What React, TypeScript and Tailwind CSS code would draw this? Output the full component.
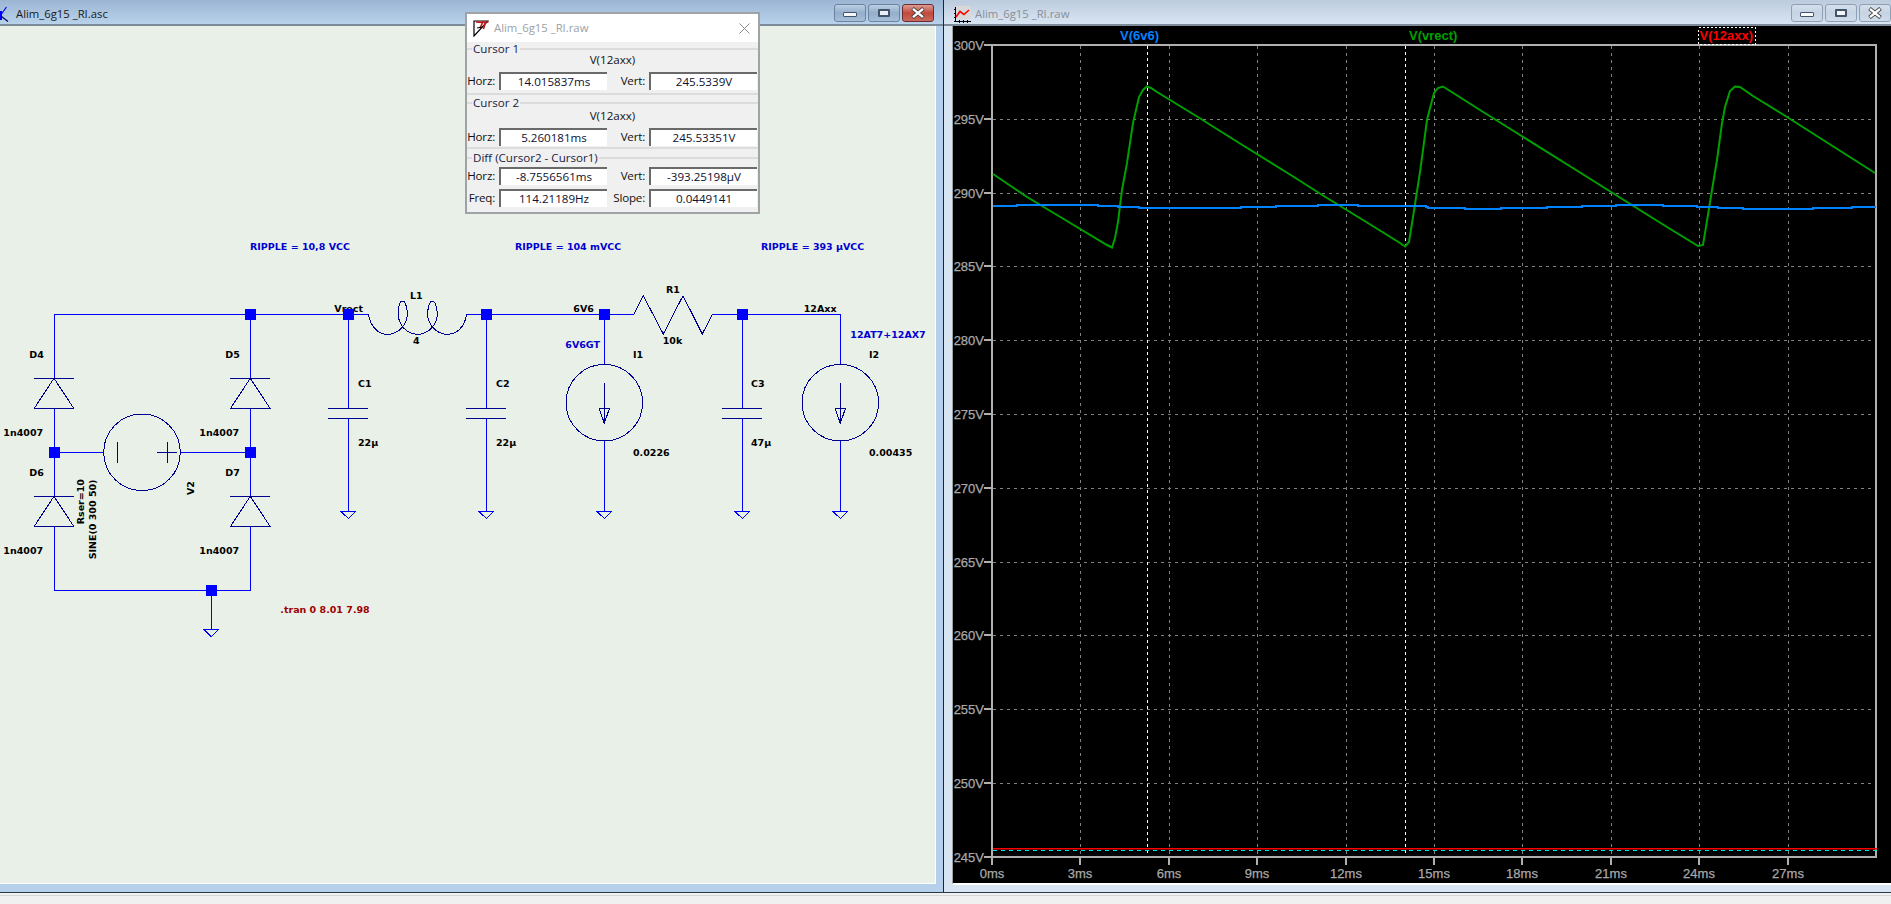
const WIRE = "#0000ff";
const SYM = "#000090";

// green trace, picked off the reference
const vrect = [
  [993, 174], [1027, 197], [1062, 218], [1107, 245], [1112, 247.5], [1115, 238], [1118, 222], [1122, 190], [1127, 163], [1133, 123], [1139, 97],
  [1143, 90], [1147, 86.5], [1151, 88], [1157, 92], [1197, 116.5], [1240, 143.5], [1290, 174.5], [1323, 195.5], [1363, 220], [1400, 243], [1405, 246.5],
  [1409, 242], [1413, 217], [1420, 172], [1423, 150], [1427, 120], [1434, 93], [1438, 88], [1443, 86.5], [1480, 110], [1520, 135], [1580, 172.5],
  [1627, 202], [1667, 227], [1698, 246], [1703, 245], [1706, 227], [1712, 190], [1717, 160], [1722, 123], [1725, 107], [1730, 91], [1735, 86.5],
  [1740, 87], [1753, 96], [1787, 117], [1875, 173],
];

// blue trace: x where the step ends, y of the step
const v6v6 = [
  [1017, 206], [1098, 205], [1118, 206], [1139, 207], [1241, 208], [1276, 207], [1318, 206], [1358, 205], [1426, 206], [1428, 207], [1428, 207],
  [1465, 208], [1501, 209], [1547, 208], [1582, 207], [1616, 206], [1663, 205], [1697, 206], [1718, 207], [1743, 208], [1813, 209], [1852, 208], [1876, 207],
];
const blueLine = (() => {
  let x = 993;
  const out: string[] = [];
  for (const [x2, y] of v6v6) {
    out.push(`${x},${y} ${x2},${y}`);
    x = x2;
  }
  return out.join(" ");
})();

const xTicks = [
  [992, "0ms"], [1080, "3ms"], [1169, "6ms"], [1257, "9ms"], [1346, "12ms"], [1434, "15ms"], [1522, "18ms"], [1611, "21ms"], [1699, "24ms"], [1788, "27ms"],
] as const;
const yTicks = ["300V", "295V", "290V", "285V", "280V", "275V", "270V", "265V", "260V", "255V", "250V", "245V"];

function Ground({ x, y }: { x: number; y: number }) {
  return <polygon points={`${x - 7.7},${y} ${x + 7.7},${y} ${x},${y + 7.5}`} fill="none" stroke={WIRE} />;
}

function Junction({ x, y }: { x: number; y: number }) {
  return <rect x={x - 5.5} y={y - 5.5} width={11} height={11} fill={WIRE} />;
}

function Diode({ x, y }: { x: number; y: number }) {
  return (
    <g fill="none" stroke={SYM}>
      <path d={`M${x - 20} ${y}H${x + 20}`} />
      <polygon points={`${x},${y} ${x + 19.7},${y + 30} ${x - 19.7},${y + 30}`} />
    </g>
  );
}

function Cap({ x }: { x: number }) {
  return (
    <g>
      <path d={`M${x} 314.3V408.3M${x} 418.3V511`} stroke={WIRE} fill="none" />
      <path d={`M${x - 20} 408.3H${x + 20}M${x - 20} 418.3H${x + 20}`} stroke={SYM} fill="none" />
      <Ground x={x} y={511} />
    </g>
  );
}

function CurrentSource({ x, y0 }: { x: number; y0: number }) {
  return (
    <g fill="none">
      <path d={`M${x} ${y0}V364.3M${x} 441V511`} stroke={WIRE} />
      <circle cx={x} cy={402.7} r={38.3} stroke={SYM} />
      <path d={`M${x} 383.3V423.3`} stroke={SYM} />
      <polygon points={`${x - 5.2},408.3 ${x + 5.2},408.3 ${x},423.3`} stroke={SYM} />
      <Ground x={x} y={511} />
    </g>
  );
}

function Label({ x, y, children, color = "#000000", rot = false }: { x: number; y: number; children: string; color?: string; rot?: boolean }) {
  return (
    <text
      x={x}
      y={y}
      fill={color}
      dominantBaseline="central"
      transform={rot ? `rotate(-90 ${x} ${y})` : undefined}
      className="font-['DejaVu_Sans',sans-serif] text-[9.5px] font-bold"
    >
      {children}
    </text>
  );
}

function Schematic() {
  return (
    <svg viewBox="0 26 935 858" shapeRendering="crispEdges" className="h-[858px] w-[935px] shrink-0">
      {/* wires */}
      <g fill="none" stroke={WIRE}>
        <path d="M54 378.3V314.3H368.3M466.7 314.3H633.7M712.3 314.3H840.3" />
        <path d="M250.3 314.3V378.3M54 408.3V496.3M250.3 408.3V496.3" />
        <path d="M54 526.3V590.3H250.3V526.3" />
        <path d="M211.3 590.3V629.3" />
        <path d="M54 452.3H103.7M180.3 452.3H250.3" />
      </g>
      <Ground x={211.3} y={629.3} />

      <Diode x={54} y={378.3} />
      <Diode x={250.3} y={378.3} />
      <Diode x={54} y={496.3} />
      <Diode x={250.3} y={496.3} />

      {/* V2 */}
      <g fill="none" stroke={SYM}>
        <circle cx={142} cy={452.3} r={38.3} />
        <path d="M117.3 441.7V462.7M157 452.3H176.7M167 441.7V462.7" />
      </g>

      {/* L1 */}
      <path
        d="M368.3 314.3C371 328 379 334.3 387.7 334.3C398 334.3 407.3 325 407.3 314.3C407.3 307 405 301 402.7 301C399.5 301 398.3 308 398.3 314.3C398.3 325 407 334.3 417.7 334.3C428 334.3 437.3 325 437.3 314.3C437.3 307 435 301 432.3 301C429.5 301 427.7 308 427.7 314.3C427.7 325 437 334.3 447.3 334.3C457 334.3 464.5 327 466.7 314.3"
        fill="none"
        stroke={SYM}
      />
      {/* R1 */}
      <polyline points="633.7,314.3 643.3,295.7 663.3,334 683,295.7 702.3,334 712.3,314.3" fill="none" stroke={SYM} />

      <Cap x={348.3} />
      <Cap x={486.3} />
      <Cap x={742.3} />
      <CurrentSource x={604.3} y0={314.3} />
      <CurrentSource x={840.3} y0={314.3} />

      <Label x={250} y={246} color="#0000d0">RIPPLE = 10,8 VCC</Label>
      <Label x={515} y={246} color="#0000d0">RIPPLE = 104 mVCC</Label>
      <Label x={761} y={246} color="#0000d0">RIPPLE = 393 µVCC</Label>
      <Label x={410} y={295.3}>L1</Label>
      <Label x={413} y={340.3}>4</Label>
      <Label x={334.3} y={308.7}>Vrect</Label>
      <Label x={29.3} y={354.3}>D4</Label>
      <Label x={225.3} y={354.3}>D5</Label>
      <Label x={29.3} y={472.3}>D6</Label>
      <Label x={225.3} y={472.3}>D7</Label>
      <Label x={3.3} y={432.3}>1n4007</Label>
      <Label x={199.3} y={432.3}>1n4007</Label>
      <Label x={3.3} y={550.3}>1n4007</Label>
      <Label x={199.3} y={550.3}>1n4007</Label>
      <Label x={81} y={524.3} rot>Rser=10</Label>
      <Label x={92.7} y={559.3} rot>SINE(0 300 50)</Label>
      <Label x={190.3} y={495} rot>V2</Label>
      <Label x={358} y={383.3}>C1</Label>
      <Label x={358} y={442.7}>22µ</Label>
      <Label x={280.3} y={609.3} color="#a00000">.tran 0 8.01 7.98</Label>
      <Label x={496} y={383.3}>C2</Label>
      <Label x={496} y={442.7}>22µ</Label>
      <Label x={573.3} y={308.3}>6V6</Label>
      <Label x={565.3} y={344.3} color="#0000d0">6V6GT</Label>
      <Label x={633} y={354.3}>I1</Label>
      <Label x={633} y={452.3}>0.0226</Label>
      <Label x={666} y={289.3}>R1</Label>
      <Label x={662.7} y={340.3}>10k</Label>
      <Label x={803.7} y={308.3}>12Axx</Label>
      <Label x={850.3} y={334.3} color="#0000d0">12AT7+12AX7</Label>
      <Label x={869} y={354.3}>I2</Label>
      <Label x={869} y={452.3}>0.00435</Label>
      <Label x={751} y={383.3}>C3</Label>
      <Label x={751} y={442.7}>47µ</Label>

      {/* wire junctions go over the text, as in the reference */}
      <Junction x={250.3} y={314.3} />
      <Junction x={348.3} y={314.3} />
      <Junction x={486.3} y={314.3} />
      <Junction x={604.3} y={314.3} />
      <Junction x={742.3} y={314.3} />
      <Junction x={54} y={452.3} />
      <Junction x={250.3} y={452.3} />
      <Junction x={211.3} y={590.3} />
    </svg>
  );
}

function Plot() {
  const font = "font-['Liberation_Sans',Arial,sans-serif] text-[13px]";
  return (
    <svg viewBox="953 26 938 857" className="h-[857px] w-[938px] shrink-0 bg-black">
      {/* grid */}
      <g stroke="#808080" strokeDasharray="3 4" fill="none" shapeRendering="crispEdges">
        {xTicks.slice(1).map(([x]) => (
          <path key={x} d={`M${x + 0.5} 46V856`} />
        ))}
        {yTicks.slice(1, -1).map((_, i) => (
          <path key={i} d={`M993 ${Math.round(45 + (i + 1) * 73.8) + 0.5}H1875`} />
        ))}
      </g>

      {/* cursors */}
      <path d="M1147.5 46V855M1405.5 46V855" stroke="#ffffff" strokeDasharray="3 3" shapeRendering="crispEdges" />

      {/* frame and ticks */}
      <g stroke="#b0b0b0" fill="none" strokeWidth={2} shapeRendering="crispEdges">
        <rect x={992} y={45} width={884} height={812} />
        {yTicks.map((_, i) => (
          <path key={i} d={`M984 ${Math.round(45 + i * 73.8)}H992`} />
        ))}
        {xTicks.map(([x]) => (
          <path key={x} d={`M${x} 857V865`} />
        ))}
      </g>

      {/* traces */}
      <polyline points={vrect.map((p) => p.join(",")).join(" ")} fill="none" stroke="#00a000" strokeWidth={2} />
      <polyline points={blueLine} fill="none" stroke="#0082ff" strokeWidth={2} shapeRendering="crispEdges" />
      <path d="M993 850H1877" stroke="#00e0e0" strokeDasharray="4 4" shapeRendering="crispEdges" />
      <path d="M993 848.7H1877" stroke="#ff0000" strokeWidth={1.4} />

      {/* axis text */}
      <g fill="#a8a8a8" stroke="#a8a8a8" strokeWidth={0.25} className={font}>
        {yTicks.map((t, i) => (
          <text key={t} x={984} y={Math.round(45 + i * 73.8)} textAnchor="end" dominantBaseline="central">{t}</text>
        ))}
        {xTicks.map(([x, t]) => (
          <text key={t} x={x} y={873} textAnchor="middle" dominantBaseline="central">{t}</text>
        ))}
      </g>

      {/* trace names */}
      <g className={`${font} font-bold`}>
        <text x={1120} y={35.5} fill="#0082ff" dominantBaseline="central">V(6v6)</text>
        <text x={1409} y={35.5} fill="#00a000" dominantBaseline="central">V(vrect)</text>
        <text x={1699.5} y={35.5} fill="#ff0000" dominantBaseline="central">V(12axx)</text>
      </g>
      <rect x={1698.5} y={27.5} width={57} height={17} fill="none" stroke="#ffffff" strokeDasharray="2 2" shapeRendering="crispEdges" />
    </svg>
  );
}

function WinButtons({ faded = false }: { faded?: boolean }) {
  const base = "flex h-[18px] w-[32px] items-center justify-center rounded-[3px] border";
  const blue = faded
    ? "border-[#8f9fb3] bg-gradient-to-b from-[#d5e0ec] via-[#c5d3e3] to-[#cfdcea]"
    : "border-[#6e83a0] bg-gradient-to-b from-[#bccfe4] via-[#94aecb] to-[#a6bfda]";
  const red = faded
    ? "border-[#8f9fb3] bg-gradient-to-b from-[#d5e0ec] via-[#c5d3e3] to-[#cfdcea]"
    : "border-[#6d2a30] bg-gradient-to-b from-[#dc9c92] via-[#c2483c] to-[#c96a5c]";
  return (
    <div className="flex items-start gap-[2px]">
      <div className={`${base} ${blue}`}>
        <div className="mt-[3px] h-[5px] w-[14px] rounded-[1px] border border-[#44536a] bg-white/90" />
      </div>
      <div className={`${base} ${blue}`}>
        <div className="mt-[-1px] h-[8px] w-[12px] rounded-[1px] border-2 border-[#44536a] bg-white/80" />
      </div>
      <div className={`${base} ${red}`}>
        <svg width="16" height="12" viewBox="0 0 16 12">
          <path d="M2.5 1.5L13.5 10.5M13.5 1.5L2.5 10.5" stroke="#3d3d3d" strokeWidth="4" />
          <path d="M3 1.8L13 10.2M13 1.8L3 10.2" stroke="#ffffff" strokeWidth="2.4" />
        </svg>
      </div>
    </div>
  );
}

function SpiceIcon() {
  return (
    <svg width="10" height="17" viewBox="0 0 10 17" className="shrink-0">
      <path d="M1 5V14" stroke="#0000ff" strokeWidth="2" />
      <path d="M1.5 8L6.5 1" stroke="#0000ff" strokeWidth="1.2" fill="none" />
      <path d="M1.5 10.5L8 15.5" stroke="#000060" strokeWidth="1.2" fill="none" />
    </svg>
  );
}

function PlotIcon() {
  return (
    <svg width="17" height="17" viewBox="0 0 17 17" className="shrink-0">
      <rect x="2" width="15" height="13" fill="#d8d8d8" />
      <path d="M1.5 1V16M0 15.5H17M0 3.5H2M0 7.5H2M0 11.5H2M5.5 14V17M9.5 14V17M13.5 14V17" stroke="#000000" />
      <path d="M2 11L6 5.5L10 8.5L15 4" stroke="#ff0000" strokeWidth="1.6" fill="none" />
    </svg>
  );
}

function LtIcon() {
  return (
    <svg width="16" height="17" viewBox="0 0 16 17" className="shrink-0">
      <path d="M1 1H15L1 16Z" fill="none" stroke="#000000" strokeWidth="1.2" />
      <path d="M3 2L10 2.5L9 4L7 8M9 2H15.5M12.5 2L10.5 9" stroke="#c01818" strokeWidth="1.6" fill="none" />
      <path d="M4 8L9.5 7" stroke="#000000" strokeWidth="1.2" />
    </svg>
  );
}

function Readout({ label, value }: { label: string; value: string }) {
  return (
    <div className="flex items-center justify-end">
      <span className="pr-[4px] tracking-[-0.2px]">{label}</span>
      <div className="flex h-[18px] w-[108px] items-center justify-center border-t-2 border-l-2 border-t-[#6a6a6a] border-l-[#6a6a6a] bg-white text-[#0d1030]">
        {value}
      </div>
    </div>
  );
}

function Row({ a, b }: { a: [string, string]; b: [string, string] }) {
  return (
    <div className="flex pr-[1px]">
      <div className="w-[140px]">
        <Readout label={a[0]} value={a[1]} />
      </div>
      <div className="flex-1">
        <Readout label={b[0]} value={b[1]} />
      </div>
    </div>
  );
}

function Group({ title, className, children }: { title: string; className: string; children: React.ReactNode }) {
  return (
    <div className={`flex flex-col border-t-2 border-[#dcdcdc] ${className}`}>
      <div className="ml-[5px] mt-[-8px] h-[14px] w-fit shrink-0 bg-[#f0f0f0] px-[1px] leading-[14px] text-[#1a1a40]">{title}</div>
      {children}
    </div>
  );
}

function CursorDialog() {
  return (
    <div className="absolute left-[465px] top-[12px] flex h-[202px] w-[295px] flex-col border-2 border-[#a0a3a6] bg-[#f0f0f0] font-['Open_Sans',sans-serif] text-[11.6px] text-[#111111]">
      <div className="flex h-[28px] shrink-0 items-center gap-[5px] bg-white pl-[6px] pr-[8px]">
        <LtIcon />
        <span className="flex-1 text-[11.3px] text-[#9aa0a6]">Alim_6g15 _RI.raw</span>
        <svg width="11" height="11" viewBox="0 0 11 11">
          <path d="M0.5 0.5L10.5 10.5M10.5 0.5L0.5 10.5" stroke="#8a8a8a" />
        </svg>
      </div>
      <Group title="Cursor 1" className="mt-[6px] h-[47px] border-b-2">
        <div className="mt-[-3px] h-[14px] text-center leading-[14px]">V(12axx)</div>
        <div className="mt-[5px]"><Row a={["Horz:", "14.015837ms"]} b={["Vert:", "245.5339V"]} /></div>
      </Group>
      <Group title="Cursor 2" className="mt-[7px] h-[47px] border-b-2">
        <div className="mt-[-1px] h-[14px] text-center leading-[14px]">V(12axx)</div>
        <div className="mt-[5px]"><Row a={["Horz:", "5.260181ms"]} b={["Vert:", "245.53351V"]} /></div>
      </Group>
      <Group title="Diff (Cursor2 - Cursor1)" className="mt-[8px] flex-1">
        <div className="mt-[2px]"><Row a={["Horz:", "-8.7556561ms"]} b={["Vert:", "-393.25198µV"]} /></div>
        <div className="mt-[4px]"><Row a={["Freq:", "114.21189Hz"]} b={["Slope:", "0.0449141"]} /></div>
      </Group>
    </div>
  );
}

export default function App() {
  return (
    <div className="relative flex h-[904px] w-[1891px] flex-col overflow-hidden bg-[#f0f0f0] font-['Open_Sans',sans-serif]">
      <div className="flex h-[893px] shrink-0 border-b border-[#2a3a44]">
        {/* schematic window */}
        <div className="flex w-[944px] shrink-0 flex-col border-r border-[#0f2a38] bg-[#b6cfea]">
          <div className="flex h-[26px] shrink-0 items-start justify-between border-b-2 border-[#7d8a99] bg-gradient-to-b from-[#9cb5d3] to-[#b9d2eb] pr-[9px] pt-[4px]">
            <div className="flex items-center gap-[6px] text-[11.3px] text-[#1a1a1a]">
              <SpiceIcon />
              <span className="leading-[20px]">Alim_6g15 _RI.asc</span>
            </div>
            <WinButtons />
          </div>
          <div className="h-[858px] w-[936px] shrink-0 border-r border-b border-white bg-[#e9f0e8]">
            <Schematic />
          </div>
        </div>
        {/* plot window */}
        <div className="flex min-w-0 flex-1 flex-col bg-[#d7e4f2]">
          <div className="flex h-[26px] shrink-0 items-start justify-between border-b-2 border-[#7d8a99] bg-gradient-to-b from-[#bccbdd] to-[#d8e5f3] pl-[10px] pr-0 pt-[4px]">
            <div className="flex items-center gap-[4px] text-[11.3px] text-[#8a8f96]">
              <PlotIcon />
              <span className="leading-[20px]">Alim_6g15 _RI.raw</span>
            </div>
            <WinButtons faded />
          </div>
          <div className="ml-[8px] h-[859px] border-b-2 border-l border-b-white border-l-[#a0a0a0]">
            <Plot />
          </div>
        </div>
      </div>
      <div className="mt-[2px] h-px bg-[#d6d6d6]" />
      <CursorDialog />
    </div>
  );
}
